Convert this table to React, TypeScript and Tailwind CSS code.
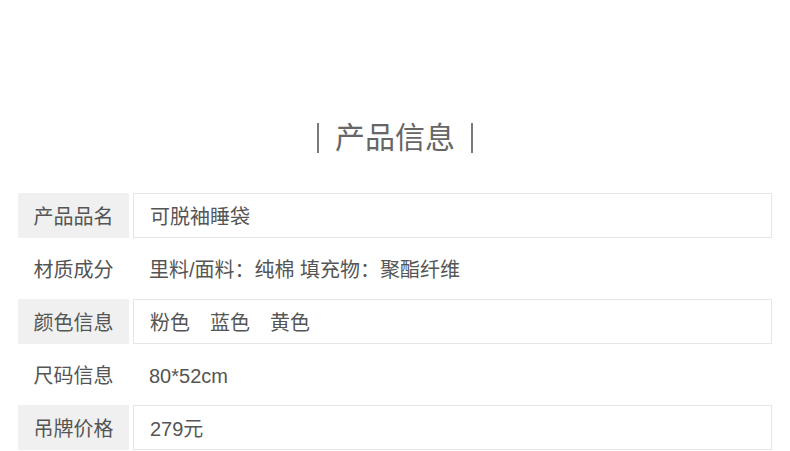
const rows = [
  { label: '产品品名', value: '可脱袖睡袋', boxed: true },
  { label: '材质成分', value: '里料/面料：纯棉 填充物：聚酯纤维', boxed: false },
  { label: '颜色信息', value: '粉色\u3000蓝色\u3000黄色', boxed: true },
  { label: '尺码信息', value: '80*52cm', boxed: false },
  { label: '吊牌价格', value: '279元', boxed: true },
]

export default function App() {
  return (
    <div
      className="w-[790px] h-[451px] overflow-hidden bg-white text-[#555]"
      style={{ fontFamily: '"Liberation Sans", "Noto Sans CJK SC", sans-serif' }}
    >
      {/* Title */}
      <div className="pt-[122px] flex items-center justify-center gap-[16px] h-[153px]">
        <div className="w-[2px] h-[30px] bg-[#7a7a7a]" />
        <h2 className="text-[30px] leading-[30px] text-[#666]">产品信息</h2>
        <div className="w-[2px] h-[30px] bg-[#7a7a7a]" />
      </div>

      {/* Info table */}
      <div className="mt-[40px] ml-[18px] w-[754px] flex flex-col gap-[8px]">
        {rows.map(row => (
          <div key={row.label} className="flex h-[45px] gap-[4px] text-[20px]">
            <div
              className={
                'w-[111px] flex items-center justify-center pt-[2px] ' +
                (row.boxed ? 'bg-[#f0f0f0]' : '')
              }
            >
              {row.label}
            </div>
            <div
              className={
                'flex-1 flex items-center pl-[16px] pt-[2px] ' +
                (row.boxed ? 'border border-[#e6e6e6]' : '')
              }
            >
              {row.value}
            </div>
          </div>
        ))}
      </div>
    </div>
  )
}
